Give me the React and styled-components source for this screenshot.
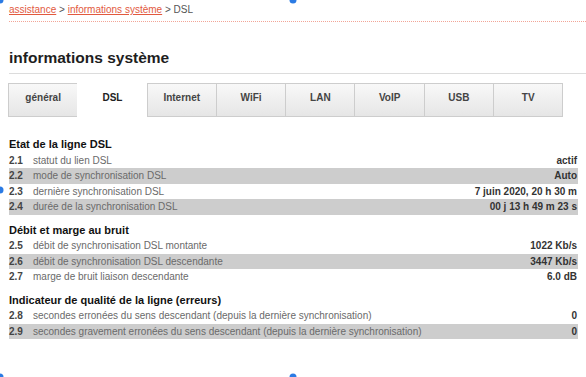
import React from 'react'
import styled, { createGlobalStyle } from 'styled-components';

const GlobalStyle = createGlobalStyle`
  body {
    margin: 0;
    background: #fff;
    font-family: "Liberation Sans", Arial, sans-serif;
  }
`

const Page = styled.div`
  position: relative;
  width: 586px;
  height: 377px;
  overflow: hidden;
  padding: 3px 8px 0 9px;
  box-sizing: border-box;
`

const Breadcrumb = styled.div`
  font-size: 10px;
  line-height: 14px;
  color: #555;
  padding-bottom: 4px;
  border-bottom: 1px dotted #f2a597;
  margin-right: -8px;
`

const Crumb = styled.a`
  color: #e2593e;
  text-decoration: underline;
`

const Title = styled.h1`
  margin: 26px -8px 0 0;
  font-size: 15.5px;
  line-height: 20px;
  font-weight: bold;
  color: #1e1e1e;
  padding-bottom: 5px;
  border-bottom: 1px solid #dcdcdc;
`

const Tabs = styled.div`
  display: grid;
  grid-template-columns: repeat(8, 69.3px);
  margin-top: 9px;
  height: 34px;
`

const Tab = styled.div`
  display: flex;
  align-items: center;
  justify-content: center;
  padding-bottom: 6px;
  font-size: 10px;
  font-weight: bold;
  color: ${p => (p.$active ? '#222' : '#444')};
  border: 1px solid ${p => (p.$active ? '#fff' : '#cdcdcd')};
  margin-left: -1px;
  background: ${p => (p.$active ? '#fff' : 'linear-gradient(#f8f8f8, #e6e6e6)')};
`

const Section = styled.div`
  margin-top: ${p => p.$first ? '20px' : '8px'};
`

const SectionTitle = styled.div`
  font-size: 11px;
  font-weight: bold;
  line-height: 14px;
  color: #111;
  margin-bottom: 1.5px;
`

const Row = styled.div`
  display: flex;
  align-items: center;
  height: 15.5px;
  font-size: 10px;
  background: ${p => (p.$shaded ? '#cdcdcd' : 'transparent')};
`

const Num = styled.span`
  width: 24px;
  color: #444;
  font-weight: bold;
  font-size: 10px;
`

const Label = styled.span`
  flex: 1;
  color: #6a6a6a;
`

const Value = styled.span`
  font-weight: bold;
  color: #333;
  padding-right: 1px;
`

const Handle = styled.span`
  position: absolute;
  width: 7px;
  height: 7px;
  border-radius: 50%;
  background: #2b7be4;
  transform: translate(-50%, -50%);
`

const sections = [
  {
    title: 'Etat de la ligne DSL',
    rows: [
      ['2.1', 'statut du lien DSL', 'actif'],
      ['2.2', 'mode de synchronisation DSL', 'Auto'],
      ['2.3', 'dernière synchronisation DSL', '7 juin 2020, 20 h 30 m'],
      ['2.4', 'durée de la synchronisation DSL', '00 j 13 h 49 m 23 s'],
    ],
  },
  {
    title: 'Débit et marge au bruit',
    rows: [
      ['2.5', 'débit de synchronisation DSL montante', '1022 Kb/s'],
      ['2.6', 'débit de synchronisation DSL descendante', '3447 Kb/s'],
      ['2.7', 'marge de bruit liaison descendante', '6.0 dB'],
    ],
  },
  {
    title: 'Indicateur de qualité de la ligne (erreurs)',
    rows: [
      ['2.8', 'secondes erronées du sens descendant (depuis la dernière synchronisation)', '0'],
      ['2.9', 'secondes gravement erronées du sens descendant (depuis la dernière synchronisation)', '0'],
    ],
  },
]

const tabs = ['général', 'DSL', 'Internet', 'WiFi', 'LAN', 'VoIP', 'USB', 'TV']

const handles = [[0, 0], [293, 0], [0, 190], [0, 377], [293, 377]]

export default function App() {
  return (
    <Page>
      <GlobalStyle />
      <Breadcrumb>
        <Crumb>assistance</Crumb> &gt; <Crumb>informations système</Crumb> &gt; DSL
      </Breadcrumb>
      <Title>informations système</Title>
      <Tabs>
        {tabs.map(t => (
          <Tab key={t} $active={t === 'DSL'}>{t}</Tab>
        ))}
      </Tabs>
      {sections.map((s, i) => (
        <Section key={s.title} $first={i === 0}>
          <SectionTitle>{s.title}</SectionTitle>
          {s.rows.map((r, j) => (
            <Row key={r[0]} $shaded={j % 2 === 1}>
              <Num>{r[0]}</Num>
              <Label>{r[1]}</Label>
              <Value>{r[2]}</Value>
            </Row>
          ))}
        </Section>
      ))}
      {handles.map(([x, y]) => (
        <Handle key={x + '-' + y} style={{ left: x, top: y }} />
      ))}
    </Page>
  );
}
